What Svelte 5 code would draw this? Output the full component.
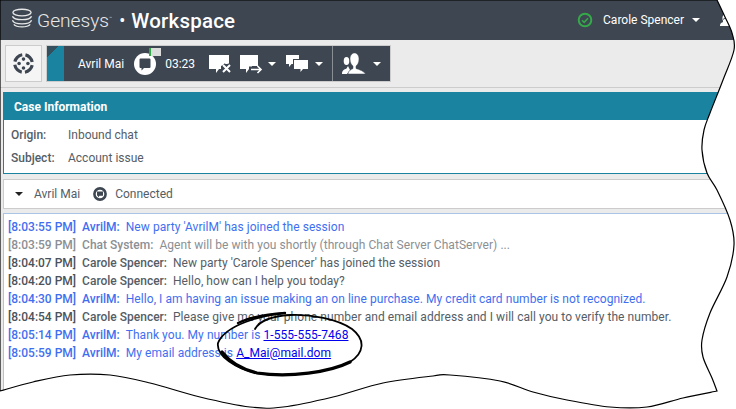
<script lang="ts">
	// the two torn sides of the sheet, each run is smoothed on its own
	const right = [[717, 0], [725, 17], [732, 33], [734, 50], [723, 80], [710, 113], [704, 130], [702, 150], [707, 173], [717, 190], [730, 220], [734, 245], [727, 277], [710, 313], [702, 340], [703, 357], [712, 378], [717, 391]];
	const bottom = [[717, 391], [683, 398], [647, 407], [610, 407], [567, 400], [533, 392], [500, 381], [450, 375], [433, 376], [383, 383], [333, 397], [283, 407], [250, 407], [200, 397], [150, 383], [110, 375], [70, 375], [33, 382], [0, 391]];

	function smooth(pts: number[][]) {
		let d = '';
		for (let i = 0; i < pts.length - 1; i++) {
			const a = pts[Math.max(i - 1, 0)];
			const b = pts[i];
			const c = pts[i + 1];
			const e = pts[Math.min(i + 2, pts.length - 1)];
			const c1 = [b[0] + (c[0] - a[0]) / 6, b[1] + (c[1] - a[1]) / 6];
			const c2 = [c[0] - (e[0] - b[0]) / 6, c[1] - (e[1] - b[1]) / 6];
			d += `C${c1[0]} ${c1[1]} ${c2[0]} ${c2[1]} ${c[0]} ${c[1]}`;
		}
		return d;
	}

	const edge = `M0 0L717 0${smooth(right)}${smooth(bottom)}Z`;

	const messages = [
		{ time: '[8:03:55 PM]', who: 'AvrilM:', text: "New party 'AvrilM' has joined the session", kind: 'client' },
		{ time: '[8:03:59 PM]', who: 'Chat System:', text: 'Agent will be with you shortly (through Chat Server ChatServer) ...', kind: 'system' },
		{ time: '[8:04:07 PM]', who: 'Carole Spencer:', text: "New party 'Carole Spencer' has joined the session", kind: 'agent' },
		{ time: '[8:04:20 PM]', who: 'Carole Spencer:', text: 'Hello, how can I help you today?', kind: 'agent' },
		{ time: '[8:04:30 PM]', who: 'AvrilM:', text: 'Hello, I am having an issue making an on line purchase. My credit card number is not recognized.', kind: 'client' },
		{ time: '[8:04:54 PM]', who: 'Carole Spencer:', text: 'Please give me your phone number and email address and I will call you to verify the number.', kind: 'agent' },
		{ time: '[8:05:14 PM]', who: 'AvrilM:', text: 'Thank you. My number is ', link: '1-555-555-7468', kind: 'client' },
		{ time: '[8:05:59 PM]', who: 'AvrilM:', text: 'My email address is ', link: 'A_Mai@mail.dom', kind: 'client' }
	];
</script>

<div class="sheet">
	<div class="page" style="clip-path: path('{edge}')">
		<header class="top">
			<svg class="logo" viewBox="0 0 24 22" aria-hidden="true">
				<g fill="none" stroke="#e8e8e8" stroke-width="1.5">
					<ellipse cx="12" cy="5" rx="10" ry="3.6" />
					<path d="M1.5 9c1 2.6 5 3.8 10.500 3.800s9.500-1.200 10.500-3.800" />
					<path d="M1.500 13.500c1 2.800 5 4 10.500 4s9.500-1.200 10.500-4" />
					<path d="M3 18c1.500 1.800 5 2.800 9 2.800s7.500-1 9-2.800" />
				</g>
			</svg>
			<span class="brand">Genesys</span>
			<span class="tm">™</span>
			<span class="dot">•</span>
			<span class="product">Workspace</span>
			<span class="user">
				<svg class="status" viewBox="0 0 16 16" aria-hidden="true">
					<circle cx="8" cy="8" r="6.300" fill="none" stroke="#35a84a" stroke-width="2" />
					<path d="M5 8.200l2.200 2.200L11 6.300" fill="none" stroke="#35a84a" stroke-width="1.600" />
				</svg>
				<span class="user-name">Carole Spencer</span>
				<i class="caret"></i>
				<svg class="help" viewBox="0 0 14 14" aria-hidden="true">
					<path d="M1 13c0-3 2-3.500 3-4V7.500C3 6.500 3 1 6.500 1S10 6.500 9 7.500V9c1 .5 4 1 4 4z" fill="#fff" />
					<path d="M4 6.500C5 5 8 5 9 6.500" fill="none" stroke="#3d4651" />
				</svg>
			</span>
		</header>

		<div class="toolbar">
			<button class="wheel" aria-label="Menu">
				<svg viewBox="0 0 20 20" aria-hidden="true">
					<circle cx="10" cy="10" r="8.400" fill="none" stroke="#3d4651" stroke-width="3" stroke-dasharray="10.200 3" stroke-dashoffset="5.100" transform="rotate(-45 10 10)" />
					<circle cx="10" cy="5.800" r="1.700" fill="#3d4651" />
					<circle cx="5.800" cy="10" r="1.700" fill="#3d4651" />
					<circle cx="14.200" cy="10" r="1.700" fill="#3d4651" />
					<circle cx="10" cy="14.200" r="1.700" fill="#3d4651" />
				</svg>
			</button>
			<div class="interaction">
				<div class="stripe"></div>
				<span class="party">Avril Mai</span>
				<span class="chat-state">
					<svg viewBox="0 0 24 24" aria-hidden="true">
						<circle cx="12" cy="12" r="11" fill="#fff" />
						<path d="M6.500 7.500a1 1 0 0 1 1-1h9a1 1 0 0 1 1 1V15a1 1 0 0 1-1 1H11l-2.500 2.500V16h-1a1 1 0 0 1-1-1z" fill="#3d4651" />
					</svg>
					<span class="timer-flag"><b></b></span>
				</span>
				<span class="clock">03:23</span>
				<svg class="tool end" viewBox="0 0 24 20" aria-hidden="true">
					<path d="M1 1h20v9h-4l-4 2v3h-2l-3 4v-4H1z" fill="#fff" />
					<path d="M15 11l7 7M22 11l-7 7" stroke="#3d4651" stroke-width="5" />
					<path d="M15 11l7 7M22 11l-7 7" stroke="#fff" stroke-width="2" />
				</svg>
				<svg class="tool transfer" viewBox="0 0 24 20" aria-hidden="true">
					<path d="M1 1h18v11h-6v3h-3l-3 4v-4H1z" fill="#fff" />
					<path d="M10 15h12" stroke="#3d4651" stroke-width="5" />
					<path d="M12 15.500h10M18.500 12l3.500 3.500-3.500 3.500" fill="none" stroke="#fff" stroke-width="1.600" />
				</svg>
				<i class="caret transfer-caret"></i>
				<svg class="tool consult" viewBox="0 0 24 20" aria-hidden="true">
					<path d="M1 1h13v9H6.500L4 13v-3H1z" fill="#fff" />
					<path d="M8 5h16v10h-5l-3 4v-4H8z" fill="#3d4651" />
					<path d="M9 6h14v9h-5l-2.500 3v-3H9z" fill="#fff" />
				</svg>
				<i class="caret"></i>
				<span class="divider"></span>
				<svg class="tool people" viewBox="0 0 26 23" aria-hidden="true">
					<ellipse cx="5.500" cy="9" rx="2.800" ry="4" fill="#fff" />
					<path d="M1 22c0-3.500 2-4.500 4.500-5.500L7 14l2 4-3 4z" fill="#fff" />
					<path d="M7 22c0-3 3-4.500 5-5.500V14c-1.500-1-3-3.500-3-7 0-3.500 2-6 4.500-6S18 3.500 18 7c0 3.500-1.500 6-3 7v2.500c3 1 8 2.500 9.500 5.500z" fill="#fff" stroke="#3d4651" stroke-width="0.500" />
				</svg>
				<i class="caret"></i>
			</div>
		</div>

		<section class="case">
			<h2>Case Information</h2>
			<dl>
				<dt>Origin:</dt>
				<dd>Inbound chat</dd>
				<dt>Subject:</dt>
				<dd>Account issue</dd>
			</dl>
		</section>

		<div class="party-bar">
			<i class="caret dark"></i>
			<span class="party-name">Avril Mai</span>
			<svg viewBox="0 0 14 14" aria-hidden="true">
				<circle cx="7" cy="7" r="5.600" fill="none" stroke="#3d4651" stroke-width="2.600" />
				<path d="M4 4.500h6v4.200H6.500L5 10.500V8.700H4z" fill="#3d4651" />
			</svg>
			<span>Connected</span>
		</div>

		<div class="transcript">
			{#each messages as m}
				<p class={m.kind}>
					<span class="stamp">{m.time}</span>
					<span class="who">{m.who}</span>
					<span class="body">{m.text}{#if m.link}<a href="#top">{m.link}</a>{/if}</span>
				</p>
			{/each}
		</div>
	</div>

	<svg class="outline" viewBox="0 0 736 409" aria-hidden="true">
		<path d={edge} fill="none" stroke="#000" stroke-width="1.200" />
	</svg>

	<svg class="marker" viewBox="0 0 736 409" aria-hidden="true">
		<g fill="none" stroke="#000" stroke-linecap="round">
			<path d="M285 313C262 315 225 325 218 343C216 356 236 369 257 373C290 378 330 372 350 362C364 353 366 340 352 329C338 319 310 314 290 315C275 316 260 320 255 329" stroke-width="1.800" />
			<path d="M222 352C232 365 245 370 257 373C290 378 330 372 350 362" stroke-width="3.200" />
			<path d="M285 313C270 314 250 317 238 323" stroke-width="2.400" />
		</g>
	</svg>
</div>

<style>
	:global(body) {
		margin: 0;
		background: #fff;
	}

	.sheet {
		position: relative;
		width: 736px;
		height: 409px;
		overflow: hidden;
		font-family: Roboto, 'Liberation Sans', sans-serif;
	}

	.page {
		display: flex;
		flex-direction: column;
		width: 736px;
		height: 409px;
		background: #ebebeb;
		color: #555d66;
		font-size: 12px;
	}

	.top {
		display: flex;
		align-items: center;
		flex: none;
		height: 40px;
		padding-left: 11px;
		background: #3d4651;
		color: #fff;
	}

	.logo {
		width: 22px;
		height: 20px;
		margin-top: -4px;
	}

	.brand {
		margin-left: 4px;
		margin-top: 1px;
		font-size: 19.2px;
		font-weight: 300;
		color: #e8e8e8;
	}

	.tm {
		align-self: flex-start;
		margin-top: 15px;
		font-size: 5px;
		color: #ccc;
	}

	.dot {
		margin-left: 7px;
		font-size: 18px;
	}

	.product {
		margin-left: 6px;
		margin-top: 1px;
		font-size: 20.500px;
		font-weight: 500;
		letter-spacing: 0.2px;
	}

	.user {
		display: flex;
		align-items: center;
		margin-left: auto;
	}

	.status {
		width: 16px;
		height: 16px;
	}

	.user-name {
		margin-left: 10px;
		font-size: 12px;
	}

	.user .caret {
		margin-left: 8px;
	}

	.help {
		width: 14px;
		height: 14px;
		margin-left: 19px;
		margin-right: 3px;
	}

	.caret {
		flex: none;
		width: 0;
		height: 0;
		border-left: 4px solid transparent;
		border-right: 4px solid transparent;
		border-top: 4px solid #fff;
	}

	.caret.dark {
		border-top-color: #222;
	}

	.toolbar {
		display: flex;
		flex: none;
		gap: 4px;
		box-sizing: border-box;
		height: 48px;
		padding: 5px 0 5px 5px;
		border-bottom: 1px solid #ccc;
	}

	.wheel {
		display: flex;
		align-items: center;
		justify-content: center;
		box-sizing: border-box;
		width: 37px;
		height: 37px;
		padding: 0;
		background: #f5f5f5;
		border: 1px solid #ccc;
	}

	.wheel svg {
		width: 21px;
		height: 21px;
	}

	.interaction {
		display: flex;
		align-items: center;
		box-sizing: border-box;
		width: 345px;
		height: 37px;
		background: #3d4651;
		border: 1px solid #ccc;
		color: #fff;
	}

	.stripe {
		align-self: stretch;
		width: 17px;
		background: linear-gradient(135deg, #34505f 0 8px, #1a84a0 8px);
	}

	.party {
		margin-left: 14px;
		font-size: 12px;
	}

	.chat-state {
		position: relative;
		display: block;
		width: 24px;
		height: 24px;
		margin-left: 9px;
	}

	.chat-state svg {
		display: block;
		width: 24px;
		height: 24px;
	}

	.timer-flag {
		position: absolute;
		top: -4px;
		left: 16px;
		display: block;
		width: 12px;
		height: 8px;
		background: #dcdcdc;
	}

	.timer-flag b {
		display: block;
		width: 2px;
		height: 8px;
		background: #35a84a;
	}

	.clock {
		margin-left: 8px;
		font-size: 12px;
	}

	.tool {
		flex: none;
		width: 24px;
		height: 20px;
	}

	.end {
		margin-left: 13px;
	}

	.transfer {
		margin-left: 7px;
	}

	.transfer-caret {
		margin-left: 5px;
	}

	.consult {
		margin-left: 9px;
	}

	.consult + .caret {
		margin-left: 6px;
	}

	.divider {
		align-self: stretch;
		width: 1px;
		margin-left: 9px;
		background: #8a8f96;
	}

	.people {
		width: 26px;
		height: 23px;
		margin-left: 8px;
	}

	.people + .caret {
		margin-left: 6px;
	}

	.case {
		flex: none;
		box-sizing: border-box;
		height: 82px;
		margin: 4px 0 0 3px;
		background: #fff;
		border-bottom: 1px solid #1a84a0;
		border-left: 1px solid #1a84a0;
	}

	.case h2 {
		box-sizing: border-box;
		height: 28px;
		margin: 0 0 0 -1px;
		padding-left: 11px;
		background: #1a84a0;
		color: #fff;
		font-size: 12px;
		font-weight: 700;
		line-height: 30px;
	}

	.case dl {
		display: grid;
		grid-template-columns: 57px 1fr;
		grid-auto-rows: 23px;
		margin: 4px 0 0 7px;
		line-height: 23px;
	}

	.case dt {
		font-weight: 500;
	}

	.case dd {
		margin: 0;
	}

	.party-bar {
		display: flex;
		align-items: center;
		flex: none;
		box-sizing: border-box;
		height: 30px;
		margin: 5px 0 0 3px;
		padding-left: 11px;
		background: #fff;
		border: 1px solid #ccc;
	}

	.party-name {
		margin-left: 11px;
		margin-right: 13px;
	}

	.party-bar svg {
		width: 14px;
		height: 14px;
		margin-right: 8px;
	}

	.transcript {
		flex: 1;
		margin: 4px 0 0 3px;
		padding-top: 4px;
		background: #fff;
		border-top: 1px solid #a9c4e4;
		border-left: 1px solid #a9c4e4;
	}

	.transcript p {
		display: flex;
		gap: 6px;
		height: 18px;
		margin: 0;
		padding-left: 4px;
		line-height: 18px;
		white-space: nowrap;
	}

	.stamp,
	.who {
		font-weight: 500;
	}

	.client {
		color: #3f6ff0;
	}

	.system {
		color: #8b8f94;
	}

	.agent {
		color: #555d66;
	}

	.agent .stamp {
		color: #4a525b;
	}

	a {
		color: #0000ee;
	}

	.body {
		white-space: pre;
		letter-spacing: 0.06px;
	}

	.outline,
	.marker {
		position: absolute;
		top: 0;
		left: 0;
		width: 736px;
		height: 409px;
		pointer-events: none;
	}
</style>
